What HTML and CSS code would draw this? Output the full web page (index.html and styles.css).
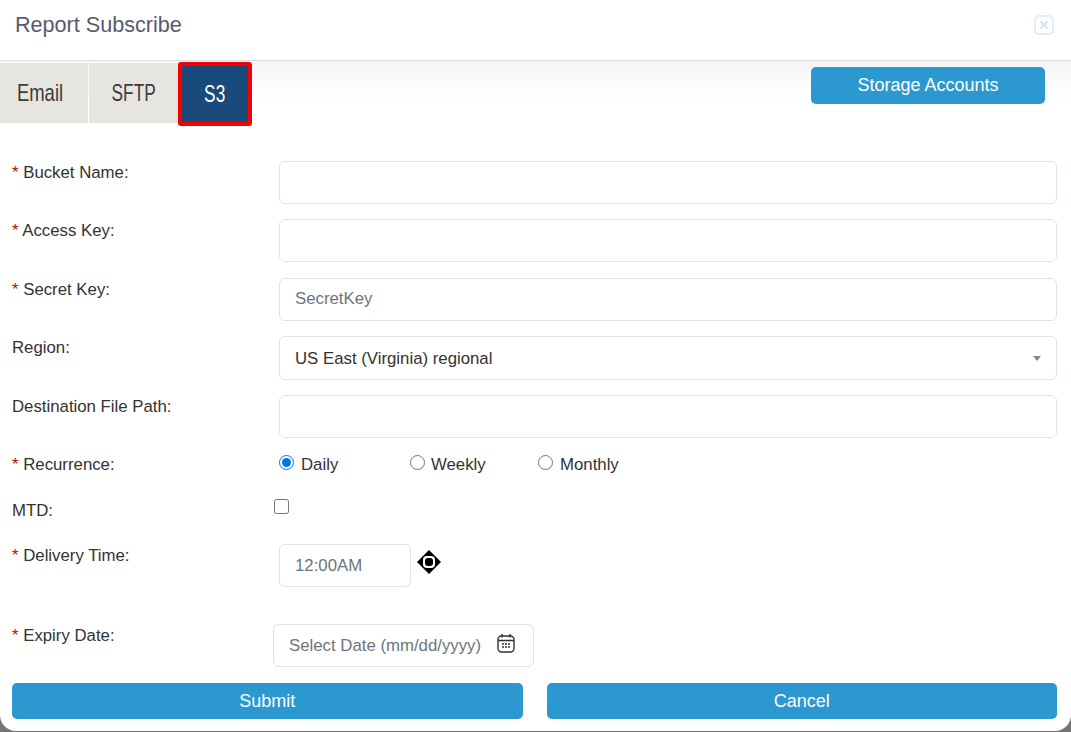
FILE: index.html
```html
<!DOCTYPE html>
<html lang="en">
<head>
<meta charset="utf-8">
<title>Report Subscribe</title>
<link rel="stylesheet" href="styles.css">
</head>
<body>
<div class="modal">
  <header class="modal-header">
    <h1 class="modal-title">Report Subscribe</h1>
    <svg class="close-icon" width="20" height="20" viewBox="0 0 20 20" aria-label="Close">
      <rect x="1" y="1" width="18" height="18" rx="4" fill="none" stroke="#e1edfb" stroke-width="2"/>
      <path d="M6.5 6.5l7 7M13.5 6.5l-7 7" fill="none" stroke="#d3e2f3" stroke-width="2"/>
    </svg>
  </header>
  <div class="tabbar">
    <nav class="tabs">
      <span class="tab tab-email"><span class="tab-text">Email</span></span>
      <span class="tab tab-sftp"><span class="tab-text">SFTP</span></span>
      <span class="tab tab-active"><span class="tab-text">S3</span></span>
    </nav>
    <button class="btn btn-storage" type="button">Storage Accounts</button>
  </div>
  <form class="form">
    <div class="row row-text">
      <label class="label"><span class="req">*</span> Bucket Name:</label>
      <input class="input" type="text">
    </div>
    <div class="row row-text">
      <label class="label"><span class="req">*</span> Access Key:</label>
      <input class="input" type="text">
    </div>
    <div class="row row-text">
      <label class="label"><span class="req">*</span> Secret Key:</label>
      <input class="input" type="text" placeholder="SecretKey">
    </div>
    <div class="row row-select">
      <label class="label">Region:</label>
      <div class="select"><span>US East (Virginia) regional</span><i class="caret"></i></div>
    </div>
    <div class="row row-text">
      <label class="label">Destination File Path:</label>
      <input class="input" type="text">
    </div>
    <div class="row row-radio">
      <label class="label"><span class="req">*</span> Recurrence:</label>
      <div class="radios">
        <label class="radio radio-daily"><input type="radio" name="rec" checked><span>Daily</span></label>
        <label class="radio radio-weekly"><input type="radio" name="rec"><span>Weekly</span></label>
        <label class="radio"><input type="radio" name="rec"><span>Monthly</span></label>
      </div>
    </div>
    <div class="row row-mtd">
      <label class="label">MTD:</label>
      <input class="check" type="checkbox">
    </div>
    <div class="row row-time">
      <label class="label"><span class="req">*</span> Delivery Time:</label>
      <input class="input input-time" type="text" placeholder="12:00AM">
      <svg class="move-icon" width="26" height="26" viewBox="0 0 26 26" aria-hidden="true">
        <path d="M13 1L25 13L13 25L1 13Z" fill="#000"/>
        <rect x="7" y="7" width="12" height="12" rx="4" fill="#fff"/>
        <rect x="9" y="9" width="8" height="8" rx="3" fill="#000"/>
      </svg>
    </div>
    <div class="row row-date">
      <label class="label"><span class="req">*</span> Expiry Date:</label>
      <div class="date">
        <span class="date-text">Select Date (mm/dd/yyyy)</span>
        <svg width="18" height="20" viewBox="0 0 18 20" aria-hidden="true">
          <rect x="1" y="3" width="16" height="16" rx="3.5" fill="none" stroke="#333" stroke-width="1.4"/>
          <path d="M1 7.5h16M5 1v3.5M13 1v3.5" fill="none" stroke="#333" stroke-width="1.4"/>
          <path d="M5 11h2M8 11h2M11 11h2M5 14h2M8 14h2M11 14h2" fill="none" stroke="#333" stroke-width="1.5"/>
        </svg>
      </div>
    </div>
    <div class="actions">
      <button class="btn btn-action" type="button">Submit</button>
      <button class="btn btn-action" type="button">Cancel</button>
    </div>
  </form>
</div>
</body>
</html>
```
FILE: styles.css
```css
* { box-sizing: border-box; }
html, body { margin: 0; height: 100%; }
body {
  background: #757575;
  font-family: "Liberation Sans", Arial, sans-serif;
  font-size: 16.8px;
  color: #333;
  overflow: hidden;
}
.modal {
  background: #fff;
  height: 731px;
  border-radius: 0 0 16px 16px;
  overflow: hidden;
}
.modal-header {
  height: 61px;
  display: flex;
  justify-content: space-between;
  align-items: flex-start;
  padding: 13px 17px 0 15px;
  border-bottom: 1px solid #dee0e3;
}
.modal-title {
  margin: 0;
  font-size: 21.6px;
  font-weight: 400;
  line-height: 23px;
  color: #565b6e;
}
.close-icon { margin-top: 2px; }
.tabbar {
  height: 100px;
  display: flex;
  justify-content: space-between;
  align-items: flex-start;
  padding-right: 26px;
  background: linear-gradient(#f5f5f5, #fff 40px);
}
.tabs { display: flex; align-items: flex-start; padding-top: 1px; }
.tab {
  display: flex;
  align-items: center;
  justify-content: center;
  height: 64px;
  font-size: 24px;
  color: #3b3b3b;
}
.tab-text { display: inline-block; transform: scaleX(0.72); }
.tab-email .tab-text { transform: scaleX(0.77); }
.tab-email, .tab-sftp { background: #e6e5e0; height: 60px; margin-top: 1px; }
.tab-email { width: 88px; margin-right: 1px; padding-right: 8px; }
.tab-sftp { width: 89px; }
.tab-active {
  width: 74px;
  background: #1a4a7a;
  border: 4px solid #f60000;
  border-radius: 3px;
  color: #fff;
}
.btn {
  border: 0;
  border-radius: 5px;
  background: #2b98cf;
  color: #fff;
  font-family: "Liberation Sans", Arial, sans-serif;
  font-size: 18px;
  font-weight: 400;
  padding: 0;
}
.btn-storage { width: 234px; height: 37px; margin-top: 6px; }
.form { padding: 0 14px 0 12px; }
.row { display: flex; align-items: flex-start; }
.label { width: 267px; flex: none; line-height: 22px; padding-top: 1px; }
.req { color: #c0090b; }
.row-text { margin-bottom: 15.4px; }
.row-select { margin-bottom: 15px; }
.input, .select, .date {
  height: 43px;
  border: 1px solid #dee2e6;
  border-radius: 6px;
  background: #fff;
  font: 16.8px "Liberation Sans", Arial, sans-serif;
  color: #333;
}
.input {
  flex: 1;
  min-width: 0;
  padding: 0 15px;
  outline: 0;
}
.input::placeholder { color: #6c757d; opacity: 1; }
.select {
  flex: 1;
  height: 44px;
  display: flex;
  align-items: center;
  justify-content: space-between;
  padding: 1px 15px 0;
}
.caret {
  width: 0;
  height: 0;
  border-left: 4px solid transparent;
  border-right: 4px solid transparent;
  border-top: 5px solid #888;
}
.row-radio { height: 43px; }
.row-radio .label { padding-top: 0; }
.radios { display: flex; }
.radio { display: flex; align-items: center; line-height: 22px; }
.radio input {
  width: 15px;
  height: 15px;
  margin: -4px 7px 0 0;
  flex: none;
  accent-color: #0075e4;
}
.radio-daily { width: 131px; }
.radio-weekly { width: 128px; }
.radio-weekly input { margin-right: 6px; }
.row-mtd { height: 47.6px; }
.row-mtd .label { width: 262px; padding-top: 3px; }
.check { width: 15px; height: 15px; margin: 2px 0 0; }
.row-time { height: 80px; }
.input-time { flex: none; width: 132px; padding-top: 1px; }
.move-icon { margin: 5px 0 0 5px; }
.row-date { height: 59px; }
.row-date .label { width: 261px; }
.date {
  width: 261px;
  display: flex;
  align-items: center;
  justify-content: space-between;
  padding: 1px 18px 0 15px;
  color: #6c757d;
}
.date svg { margin-top: -6px; }
.actions { display: flex; gap: 24px; }
.btn-action { flex: 1; height: 36px; }
```
